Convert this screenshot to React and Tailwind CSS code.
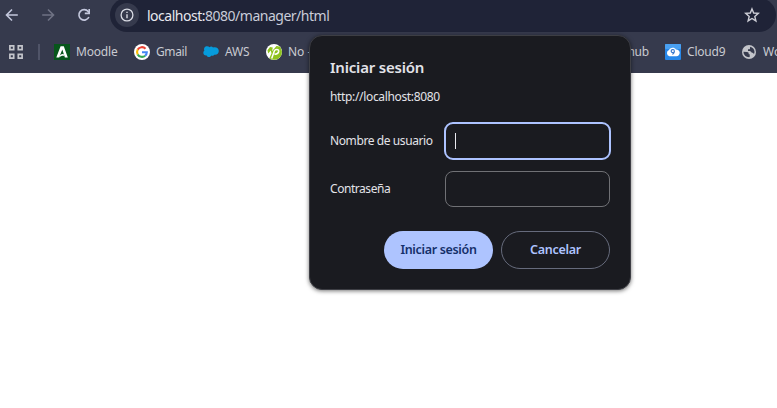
import React from 'react';

const stroke = { fill: 'none', stroke: 'currentColor', strokeWidth: 1.6 };

function Arrow({ className }) {
  return (
    <svg className={className} width="14" height="14" viewBox="0 0 14 14" {...stroke}>
      <path d="M12.8 7H1.800M7 1.500 1.500 7 7 12.500" />
    </svg>
  );
}

function Reload() {
  return (
    <svg className="text-[#c3c7dc]" width="14" height="14" viewBox="0 0 14 14" {...stroke}>
      <path d="M11.9 9A5.200 5.200 0 1 1 11.200 3.600L12 4.600" />
      <path d="M12.200 1v4.400H7.800" />
    </svg>
  );
}

function InfoIcon() {
  return (
    <svg width="14" height="14" viewBox="0 0 14 14" fill="none" stroke="#d9dbe4">
      <circle cx="7" cy="7" r="5.9" strokeWidth="1.3" />
      <path d="M7 6.3v4M7 3.700v1.400" strokeWidth="1.4" />
    </svg>
  );
}

function Star() {
  return (
    <svg width="16" height="16" viewBox="0 0 16 16" fill="none" stroke="#cdced6" strokeWidth="1.4">
      <path d="m8 1.900 1.700 4.100 4.600.4-3.500 3 1.100 4.500L8 11.500l-3.900 2.400 1.100-4.500-3.500-3 4.600-.4z" />
    </svg>
  );
}

function Apps() {
  return (
    <svg className="shrink-0" width="16" height="16" viewBox="0 0 16 16" fill="none" stroke="#c4c5cb" strokeWidth="1.7">
      <path d="M1.900 1.900h3.800v3.800H1.900zM10.300 1.900h3.800v3.800h-3.800zM1.900 10.300h3.800v3.800H1.900zM10.300 10.300h3.800v3.800h-3.800z" />
    </svg>
  );
}

function MoodleIcon() {
  return (
    <svg width="16" height="16" viewBox="0 0 16 16">
      <rect width="16" height="16" fill="#07561b" />
      <path d="M2.300 13.600 6.600 2.200h3.200l4 11.400h-2.900L8.300 5.400 5.100 13.600z" fill="#fff" />
      <path d="M5.200 13.600c.2-2.400 1.800-3.800 4.400-3.500l.6 1.600c-2.200-.3-3.700.3-5 1.900z" fill="#fff" />
    </svg>
  );
}

function GoogleIcon() {
  return (
    <svg width="16" height="16" viewBox="0 0 16 16">
      <circle cx="8" cy="8" r="8" fill="#fff" />
      <g fill="none" strokeWidth="2.1">
        <path d="M3.700 5.600A4.900 4.900 0 0 1 11.500 4.700" stroke="#ea4335" />
        <path d="M3.700 5.600a5 5 0 0 0 0 4.800" stroke="#fbbc05" />
        <path d="M3.700 10.400a4.900 4.900 0 0 0 7.500 1.300" stroke="#34a853" />
        <path d="M11.200 11.700A4.900 4.900 0 0 0 12.800 8.200H8" stroke="#4285f4" />
      </g>
    </svg>
  );
}

function SalesforceIcon() {
  return (
    <svg width="16" height="16" viewBox="0 0 16 16">
      <path
        d="M6.600 3.200c.9-.9 2.600-.8 3.400.4 2.900-1.100 5.800.6 5.800 3.400 0 2.600-2.200 4.200-4.500 3.700-.6 1-1.900 1.400-3 .9-.9 2-3.800 2-4.600-.1C1.600 11.800.3 10.300.3 8.800c0-.9.4-1.700 1.100-2.200C.3 4.300 2 2.200 4 2.200c1.100 0 2 .3 2.600 1z"
        fill="#069bdc"
      />
    </svg>
  );
}

function NoIpIcon() {
  return (
    <svg width="16" height="16" viewBox="0 0 16 16">
      <circle cx="8" cy="8" r="8" fill="#fff" />
      <path d="M13.200 2A7.900 7.900 0 0 1 3.300 14.300L5 10.500l3.400-5z" fill="#8fc31f" />
      <path d="M1.500 6.200 4 3l2.800.600-.8 3.600L10.500 2l2 .3-5.300 7-.9 2.400-1.600-5.200-2.500 3z" fill="#8fc31f" />
      <path d="m5.700 14.400 2.700-7.600c.8-2 4.600-1.900 4.300.6-.3 2-2 2.900-4.300 2.700" stroke="#fff" strokeWidth="1.5" fill="none" />
    </svg>
  );
}

function Cloud9Icon() {
  return (
    <svg width="16" height="16" viewBox="0 0 16 16">
      <rect width="16" height="16" rx="1" fill="#2787e8" />
      <rect width="16" height="5" rx="1" fill="#4aa0f1" />
      <path d="M4.400 12.200a3.200 3.200 0 0 1-.4-6.100C4.700 3.500 9.200 2.500 11 5.500c2.100-.1 3.700 1.300 3.700 3.300 0 1.900-1.400 3.400-3.300 3.400z" fill="#fff" />
      <path d="M9.400 6.900a1.600 1.600 0 1 0-1 1.700c.6-.2 1-.8 1-1.700 0 1.700-.6 2.900-1.900 3.700" stroke="#3979cc" strokeWidth="1.2" fill="none" />
    </svg>
  );
}

function Globe() {
  return (
    <svg width="14" height="14" viewBox="0 0 14 14">
      <circle cx="7" cy="7" r="7" fill="#c3c4ca" />
      <path
        d="M1.500 6.700 5 7c1.400.1 1.800.8 1.700 2.200h1v2.900C4.300 12.400 1.500 10 1.500 6.700zM8.300 1.700c2.200.5 4.200 2.500 4.200 5.100 0 1-.2 1.800-.6 2.500C11.500 8 11 7.800 9.800 7.800c-.6-1.600-1.500-2-3.800-1.900V4.300h1.600c.7-.5.2-1.500.7-2.600z"
        fill="#363a4d"
      />
    </svg>
  );
}

function Bookmark({ icon, label, className, text = '' }) {
  return (
    <div className={`flex shrink-0 items-center ${className}`}>
      {icon}
      <span className={`whitespace-nowrap ${text}`}>{label}</span>
    </div>
  );
}

export default function App() {
  return (
    <div className="relative h-[408px] w-[777px] overflow-hidden bg-white font-['Noto_Sans','Open_Sans',sans-serif]">
      <header className="h-[73px] bg-[#363a4d]">
        <div className="flex h-8 items-start overflow-hidden pl-[5px]">
          <div className="flex h-[30px] items-center">
            <Arrow className="mr-[22px] text-[#c3c7dc]" />
            <Arrow className="mr-[22px] rotate-180 text-[#6f7284]" />
            <Reload />
          </div>
          <div className="-mt-0.5 ml-[19px] flex h-[34px] w-[666px] shrink-0 items-center rounded-full bg-[#1f2337] pr-4 pl-[5px]">
            <span className="flex size-6 items-center justify-center rounded-full bg-[#363a4d]">
              <InfoIcon />
            </span>
            <span className="ml-2 flex-1 text-[14px] tracking-[-0.49px] text-[#c9ccd9]">
              <span className="text-[#e8e9ef]">localhost:</span>8080/manager/html
            </span>
            <Star />
          </div>
        </div>
        <nav className="flex h-10 items-center overflow-hidden pl-2 text-[12px] text-[#c9cad1]">
          <Apps />
          <span className="mr-3.5 ml-3.5 h-4 w-0.5 shrink-0 bg-[#505468]" />
          <Bookmark className="w-20 gap-1.5" icon={<MoodleIcon />} label="Moodle" text="tracking-[-0.2px]" />
          <Bookmark className="w-[69px] gap-1.5" icon={<GoogleIcon />} label="Gmail" text="tracking-[-0.4px]" />
          <Bookmark className="w-[63px] gap-1.5" icon={<SalesforceIcon />} label="AWS" text="tracking-[-0.2px]" />
          <Bookmark className="w-[100px] gap-1.5" icon={<NoIpIcon />} label="No - IP" />
          <Bookmark className="w-[283px] justify-end" label="Github" text="tracking-[-0.2px]" />
          <Bookmark className="ml-4 w-[77px] gap-1.5" icon={<Cloud9Icon />} label="Cloud9" text="tracking-[-0.2px]" />
          <Bookmark className="gap-[7px]" icon={<Globe />} label="Wo" />
        </nav>
      </header>

      <form
        className="absolute top-[35px] left-[309px] flex h-[255px] w-[322px] flex-col rounded-[13px] border border-[#3d3e44] bg-[#1a1b20] pr-5 pl-5 text-[12px] text-[#e3e3e9] shadow-[0_1px_4px_rgba(0,0,0,0.55)]"
        onSubmit={(e) => e.preventDefault()}
      >
        <h1 className="mt-[19px] text-[15px] leading-6 font-semibold tracking-[-0.2px]">Iniciar sesión</h1>
        <p className="mt-2 leading-5 tracking-[-0.34px]">http://localhost:8080</p>
        <div className="mt-[15px] flex h-[38px] items-center justify-between">
          <span className="tracking-[-0.4px]">Nombre de usuario</span>
          <div className="-mr-px flex h-[38px] w-[167px] items-center rounded-[9px] border-2 border-[#adc3ff] pl-[9px]">
            <span className="h-4 w-px bg-[#e9e9ee]" />
          </div>
        </div>
        <div className="mt-[11px] flex h-9 items-center justify-between">
          <span className="tracking-[-0.45px]">Contraseña</span>
          <div className="h-9 w-[165px] rounded-lg border border-[#707175]" />
        </div>
        <div className="mt-6 flex justify-end gap-2 text-[12.5px] font-semibold">
          <button className="h-[38px] w-[109px] rounded-full bg-[#aec4ff] tracking-[-0.33px] whitespace-nowrap text-[#15306a]">Iniciar sesión</button>
          <button className="h-[38px] w-[109px] rounded-full border border-[#666b7c] tracking-[-0.25px] text-[#aec4ff]">Cancelar</button>
        </div>
      </form>
    </div>
  );
}
